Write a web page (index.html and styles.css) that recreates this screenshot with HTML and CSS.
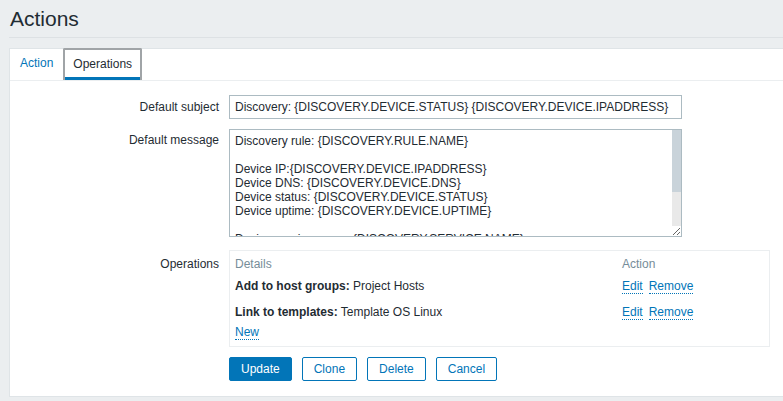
FILE: index.html
```html
<!DOCTYPE html>
<html>
<head>
<meta charset="utf-8">
<link rel="stylesheet" href="styles.css">
</head>
<body>
<div class="page">
  <header class="header">
    <h1>Actions</h1>
  </header>
  <div class="panel">
    <ul class="tabs">
      <li class="tab"><a class="tab-link">Action</a></li>
      <li class="tab active"><a class="tab-link">Operations</a></li>
    </ul>
    <div class="form">
      <label class="lbl">Default subject</label>
      <div class="field"><input class="input" type="text" value="Discovery: {DISCOVERY.DEVICE.STATUS} {DISCOVERY.DEVICE.IPADDRESS}"></div>

      <label class="lbl lbl-top">Default message</label>
      <div class="field">
        <div class="ta-wrap">
          <textarea class="textarea">Discovery rule: {DISCOVERY.RULE.NAME}

Device IP:{DISCOVERY.DEVICE.IPADDRESS}
Device DNS: {DISCOVERY.DEVICE.DNS}
Device status: {DISCOVERY.DEVICE.STATUS}
Device uptime: {DISCOVERY.DEVICE.UPTIME}

Device service name: {DISCOVERY.SERVICE.NAME}
Device service port: {DISCOVERY.SERVICE.PORT}
Device service status: {DISCOVERY.SERVICE.STATUS}
Device service uptime: {DISCOVERY.SERVICE.UPTIME}</textarea>
          <div class="ta-scroll"><div class="ta-thumb"></div></div>
        </div>
      </div>

      <label class="lbl lbl-ops">Operations</label>
      <div class="field">
        <div class="ops">
          <div class="ops-row ops-head">
            <span class="ops-details">Details</span>
            <span class="ops-action">Action</span>
          </div>
          <div class="ops-row">
            <span class="ops-details"><b>Add to host groups:</b> Project Hosts</span>
            <span class="ops-action"><a class="link">Edit</a><a class="link">Remove</a></span>
          </div>
          <div class="ops-row">
            <span class="ops-details"><b>Link to templates:</b> Template OS Linux</span>
            <span class="ops-action"><a class="link">Edit</a><a class="link">Remove</a></span>
          </div>
          <div class="ops-new"><a class="link">New</a></div>
        </div>
      </div>

      <div class="spacer"></div>
      <div class="buttons">
        <button class="btn btn-primary">Update</button>
        <button class="btn">Clone</button>
        <button class="btn">Delete</button>
        <button class="btn">Cancel</button>
      </div>
    </div>
  </div>
</div>
</body>
</html>
```

FILE: styles.css
```css
* { box-sizing: border-box; }
html, body {
  margin: 0;
  padding: 0;
  background: #ebeef0;
  overflow: hidden;
}
body {
  font-family: "Liberation Sans", Arial, sans-serif;
  font-size: 12px;
  color: #1f2c33;
}
.page {
  padding-left: 9px;
  width: 800px;
}
.header {
  height: 38px;
  border-bottom: 1px solid #dde1e4;
}
.header h1 {
  margin: 0;
  padding-top: 6px;
  padding-left: 1px;
  font-size: 21px;
  font-weight: normal;
  line-height: 26px;
  color: #1f2c33;
}
.panel {
  margin-top: 10px;
  background: #fff;
  border: 1px solid #dfe4e7;
  height: 349px;
}
.tabs {
  list-style: none;
  margin: 0;
  padding: 0;
  display: flex;
  height: 32px;
  border-bottom: 1px solid #ebeef0;
}
.tab {
  height: 31px;
}
.tab-link {
  display: block;
  padding: 0 10px;
  line-height: 29px;
  color: #0275b8;
}
.tab.active {
  margin-top: -1px;
  height: 32px;
  border: 2px solid #a0a4a7;
  border-bottom: none;
  border-radius: 2px 2px 0 0;
  box-shadow: inset 0 -3px 0 #0275b8;
}
.tab.active .tab-link {
  color: #1f2c33;
  padding: 0 8px;
  line-height: 29px;
}
.form {
  display: grid;
  grid-template-columns: 209px 1fr;
  column-gap: 10px;
  padding-top: 14px;
}
.lbl {
  text-align: right;
  line-height: 24px;
}
.lbl-top { margin-top: 10px; line-height: 22px; }
.lbl-ops { margin-top: 16px; line-height: 22px; }
.input {
  display: block;
  width: 453px;
  height: 24px;
  border: 1px solid #acbbc2;
  padding: 0 5px;
  font-family: inherit;
  font-size: 12px;
  color: #1f2c33;
  background: #fff;
  outline: none;
  margin: 0;
}
.ta-wrap {
  position: relative;
  width: 453px;
  margin-top: 10px;
}
.textarea {
  display: block;
  width: 453px;
  height: 108px;
  border: 1px solid #acbbc2;
  padding: 4px 14px 4px 5px;
  font-family: inherit;
  font-size: 12px;
  line-height: 14px;
  color: #1f2c33;
  resize: both;
  overflow: hidden;
  outline: none;
  margin: 0;
}
.ta-scroll {
  position: absolute;
  top: 1px;
  right: 1px;
  bottom: 11px;
  width: 9px;
  background: #e9e9e9;
}
.ta-thumb {
  height: 62px;
  background: #c9d3da;
}
.ops {
  margin-top: 13px;
  width: 541px;
  border: 1px solid #ebeef0;
  padding: 4px 5px 5px;
}
.ops-row {
  display: flex;
  align-items: baseline;
  line-height: 18px;
  margin-bottom: 8px;
}
.ops-head {
  color: #768d99;
  margin-bottom: 4px;
}
.ops-details { width: 387px; }
.ops-action { display: flex; gap: 6px; align-items: baseline; }
.ops-new { line-height: 18px; margin-top: -6px; }
.link {
  color: #0275b8;
  border-bottom: 1px dotted #0275b8;
  line-height: 14px;
}
.buttons {
  display: flex;
  gap: 10px;
  margin-top: 10px;
}
.btn {
  height: 24px;
  padding: 0 11px;
  background: #fff;
  color: #0275b8;
  border: 1px solid #0275b8;
  border-radius: 2px;
  font-family: inherit;
  font-size: 12px;
  margin: 0;
}
.btn-primary {
  background: #0275b8;
  color: #fff;
}
```
